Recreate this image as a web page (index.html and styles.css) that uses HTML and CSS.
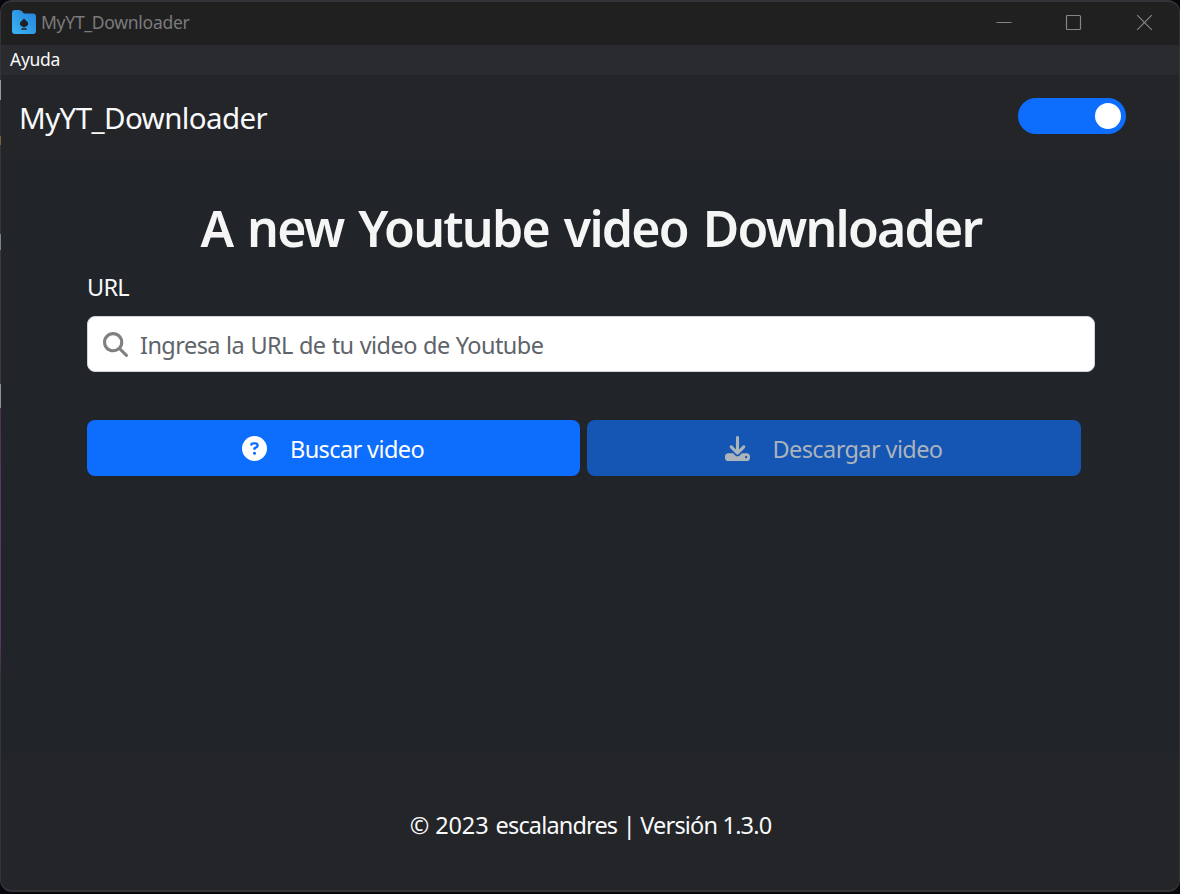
FILE: index.html
```html
<!DOCTYPE html>
<html lang="es">
<head>
<meta charset="utf-8">
<title>MyYT_Downloader</title>
<link rel="stylesheet" href="styles.css">
</head>
<body>
<div class="window">
  <header class="titlebar">
    <svg class="app-icon" viewBox="0 0 24 24">
      <defs><linearGradient id="folder" x1="0" y1="1" x2="1" y2="0"><stop offset="0" stop-color="#3cb4f2"/><stop offset="1" stop-color="#2482da"/></linearGradient></defs>
      <path fill="url(#folder)" d="M0 3Q0 0 3 0H7Q9 0 10.2 1.5L12 3.600H21Q24 3.600 24 6.600V21Q24 24 21 24H3Q0 24 0 21Z"/>
      <path fill="#1d2428" d="M12 8.500L16 12.500V14.800L14.500 16.300H13.500V17.300H10.500V16.300H9.500L8 14.800V12.500ZM9.300 18.300H14.700V19.800H9.300Z"/>
    </svg>
    <span class="window-title">MyYT_Downloader</span>
    <div class="controls">
      <svg viewBox="0 0 16 16"><path d="M.5 8.500H15.500"/></svg>
      <svg viewBox="0 0 16 16"><rect x=".5" y="1.500" width="14" height="14" rx="1"/></svg>
      <svg viewBox="0 0 16 16"><path d="M1.200 1.200L15.800 15.800M15.800 1.200L1.200 15.800"/></svg>
    </div>
  </header>
  <nav class="menubar"><span class="menu-item">Ayuda</span></nav>
  <div class="navbar">
    <span class="brand">MyYT_Downloader</span>
    <div class="switch"><span class="knob"></span></div>
  </div>
  <main class="content">
    <h1 class="heading"><span>A new Youtube video Downloader</span></h1>
    <div class="label"><span>URL</span></div>
    <div class="field">
      <svg class="icon" viewBox="0 0 512 512"><path d="M416 208c0 45.900-14.900 88.300-40 122.700L502.600 457.400c12.500 12.500 12.500 32.800 0 45.300s-32.800 12.500-45.300 0L330.700 376c-34.400 25.200-76.800 40-122.700 40C93.100 416 0 322.900 0 208S93.100 0 208 0S416 93.100 416 208zM208 352a144 144 0 1 0 0-288 144 144 0 1 0 0 288z"/></svg>
      <span class="placeholder">Ingresa la URL de tu video de Youtube</span>
    </div>
    <div class="buttons">
      <div class="button">
        <svg class="icon" viewBox="0 0 512 512"><path d="M256 512A256 256 0 1 0 256 0a256 256 0 1 0 0 512zM169.800 165.300c7.900-22.300 29.100-37.300 52.800-37.300h58.300c34.900 0 63.100 28.300 63.100 63.100c0 22.600-12.100 43.500-31.700 54.800L280 264.400c-.2 13-10.900 23.600-24 23.600c-13.300 0-24-10.700-24-24V250.500c0-8.600 4.600-16.500 12.100-20.800l44.300-25.400c4.700-2.700 7.600-7.700 7.600-13.100c0-8.400-6.800-15.100-15.100-15.100H222.600c-3.400 0-6.400 2.100-7.500 5.300l-.4 1.200c-4.400 12.500-18.200 19-30.600 14.600s-19-18.200-14.600-30.600l.3-1.300zM224 352a32 32 0 1 1 64 0 32 32 0 1 1-64 0z"/></svg>
        <span class="button-text">Buscar video</span>
      </div>
      <div class="button disabled">
        <svg class="icon" viewBox="0 0 512 512"><path d="M288 32c0-17.700-14.300-32-32-32s-32 14.300-32 32V274.700l-73.400-73.400c-12.500-12.500-32.800-12.500-45.300 0s-12.500 32.800 0 45.300l128 128c12.500 12.500 32.800 12.500 45.300 0l128-128c12.500-12.500 12.500-32.800 0-45.300s-32.800-12.500-45.300 0L288 274.700V32zM64 352c-35.300 0-64 28.700-64 64v32c0 35.300 28.700 64 64 64H448c35.300 0 64-28.700 64-64V416c0-35.300-28.700-64-64-64H346.500l-45.300 45.300c-25 25-65.500 25-90.500 0L165.500 352H64zm368 56a24 24 0 1 1 0 48 24 24 0 1 1 0-48z"/></svg>
        <span class="button-text">Descargar video</span>
      </div>
    </div>
  </main>
  <footer class="footer"><span class="copyright">© 2023</span><span class="footer-text">escalandres | Versión 1.3.0</span></footer>
</div>
</body>
</html>
```
FILE: styles.css
```css
* { box-sizing: border-box; }
body {
  margin: 0;
  height: 894px;
  overflow: hidden;
  background: #08060c;
  font-family: "Noto Sans", "Open Sans", sans-serif;
  font-size: 23.5px;
  color: #f8f9fa;
}
/* Desktop showing through along the window's left edge */
body::before {
  content: "";
  position: absolute;
  z-index: 1;
  left: 0;
  top: 80px;
  width: 1px;
  height: 600px;
  background: linear-gradient(
    #98999b 0 20px, #2d2c30 20px 56px, #75633f 56px 65px, #3a3538 65px 154px,
    #808183 154px 170px, #3d363b 170px 304px, #8f9092 304px 328px,
    #4b3451 328px, #633a67 450px, #5f3563 560px, #343438 600px);
}
span { white-space: nowrap; }
.window {
  height: 892px;
  display: flex;
  flex-direction: column;
  overflow: hidden;
  border: 1px solid #343438;
  border-top-width: 2px;
  border-bottom-width: 2px;
  border-radius: 12px;
  background: #212529;
}
.titlebar {
  height: 43px;
  flex: none;
  display: flex;
  align-items: center;
  padding: 0 27px 3px 11px;
  background: #202020;
  color: #7b7b7b;
}
.app-icon { width: 24px; height: 24px; margin-right: 5px; }
.window-title { font-size: 17.5px; letter-spacing: -.27px; }
.controls { display: flex; gap: 54px; margin-left: auto; }
.controls svg { width: 16px; height: 16px; fill: none; stroke: #858585; stroke-width: 1.2; overflow: visible; }
.menubar {
  height: 30px;
  flex: none;
  display: flex;
  align-items: center;
  padding: 0 0 2px 9px;
  background: #2a2b2e;
  font-size: 17.5px;
}
.menu-item { letter-spacing: -.3px; }
.navbar {
  height: 85px;
  flex: none;
  display: flex;
  justify-content: space-between;
  align-items: center;
  padding: 0 53px 3px 18px;
  background: #242528;
}
.brand { font-size: 29.5px; letter-spacing: -.6px; padding-top: 2px; }
.switch {
  width: 108px;
  height: 36px;
  display: flex;
  align-items: center;
  justify-content: flex-end;
  padding-right: 5px;
  border-radius: 18px;
  background: #0d6efd;
}
.knob { width: 26px; height: 26px; border-radius: 50%; background: #fff; }
.content { flex: 1; padding: 38px 84px 0 86px; }
.heading {
  margin: 0;
  height: 62px;
  line-height: 60px;
  text-align: center;
  font-size: 50px;
  font-weight: 600;
  letter-spacing: -1.75px;
  word-spacing: 3.5px;
  color: #f5f5f5;
}
.label { height: 56px; line-height: 54px; letter-spacing: -.8px; }
.field {
  height: 56px;
  display: flex;
  align-items: center;
  gap: 12px;
  padding-left: 15px;
  border: 1px solid #ced4da;
  border-radius: 8px;
  background: #fff;
  color: #5e646a;
}
.placeholder { letter-spacing: -.56px; word-spacing: .6px; padding-top: 2px; }
.icon { width: 25px; height: 25px; flex: none; fill: currentColor; }
.field .icon { fill: #808080; }
.buttons {
  display: grid;
  grid-template-columns: 493px 494px;
  gap: 7px;
  margin-top: 48px;
}
.button {
  height: 56px;
  display: flex;
  align-items: center;
  justify-content: center;
  gap: 23px;
  padding: 1px 1px 0 0;
  border-radius: 8px;
  background: #0d6efd;
  color: #fff;
}
.button-text { letter-spacing: -.6px; padding-top: 1px; }
.disabled { background: #1555b4; color: #abb3bb; }
.footer {
  height: 133px;
  flex: none;
  display: flex;
  justify-content: center;
  align-items: center;
  gap: 7px;
  padding: 2px 0 0 1px;
  background: #242528;
}
.copyright { letter-spacing: -.1px; }
.footer-text { letter-spacing: -.84px; word-spacing: .2px; }
```
